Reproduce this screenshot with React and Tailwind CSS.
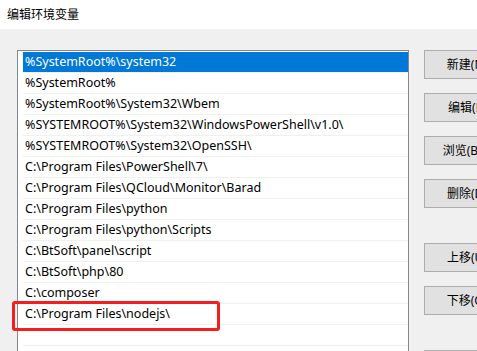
import React from 'react';

const paths = [
  '%SystemRoot%\\system32',
  '%SystemRoot%',
  '%SystemRoot%\\System32\\Wbem',
  '%SYSTEMROOT%\\System32\\WindowsPowerShell\\v1.0\\',
  '%SYSTEMROOT%\\System32\\OpenSSH\\',
  'C:\\Program Files\\PowerShell\\7\\',
  'C:\\Program Files\\QCloud\\Monitor\\Barad',
  'C:\\Program Files\\python',
  'C:\\Program Files\\python\\Scripts',
  'C:\\BtSoft\\panel\\script',
  'C:\\BtSoft\\php\\80',
  'C:\\composer',
  'C:\\Program Files\\nodejs\\',
  '',
  '',
];

const buttons = [
  { label: '新建(N)', gap: false },
  { label: '编辑(E)', gap: false },
  { label: '浏览(B)...', gap: false },
  { label: '删除(D)', gap: false },
  { label: '上移(U)', gap: true },
  { label: '下移(O)', gap: false },
  { label: '编辑文本(T)...', gap: true },
];

const font = { fontFamily: '"Noto Sans", "Noto Sans CJK SC", sans-serif' };

export default function App() {
  return (
    <div className="relative w-[477px] h-[351px] overflow-hidden bg-[#f0f0f0] text-black text-[12px]" style={font}>
      <div className="h-[29px] bg-white flex items-center pl-[7px]">编辑环境变量</div>

      <div className="flex items-start pl-[17px] pt-[21px] gap-[15px]">
        <div className="w-[392px] h-[320px] shrink-0 border border-[#828790] bg-white pl-[5px] pt-px text-[12.5px]">
          {paths.map((p, i) => (
            <div
              key={i}
              className={
                i === 0
                  ? 'h-[21px] flex items-center pl-[2px] border-b border-[#f0f0f0] bg-[#0078d7] text-white whitespace-nowrap'
                  : 'h-[21px] flex items-center pl-[2px] border-b border-[#f0f0f0] whitespace-nowrap'
              }
            >
              {p}
            </div>
          ))}
        </div>

        <div className="flex flex-col shrink-0">
          {buttons.map((b, i) => (
            <div
              key={i}
              className={
                (i === 0 ? '' : b.gap ? 'mt-[35px] ' : 'mt-[14px] ') +
                'w-[86px] h-[29px] flex items-center justify-center bg-[#e1e1e1] border border-[#adadad] whitespace-nowrap'
              }
            >
              {b.label}
            </div>
          ))}
        </div>
      </div>

      {/* annotation round the nodejs entry */}
      <div className="absolute left-[12px] top-[301px] w-[208px] h-[30px] border-[3px] border-[#f51d1d] rounded-[3px]" />
    </div>
  );
}
